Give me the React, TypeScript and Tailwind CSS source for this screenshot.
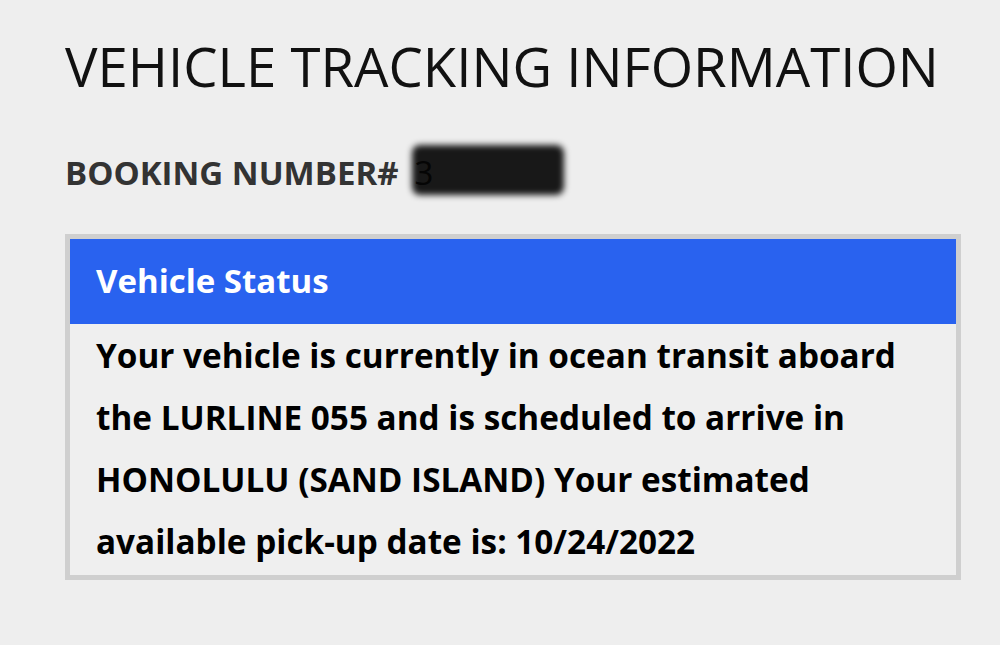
export default function App() {
  return (
    <div className="min-h-[645px] w-[1000px] bg-[#eeeeee] pl-[65px] pt-[30px]" style={{ fontFamily: '"Open Sans", "Noto Sans", sans-serif' }}>
      <h1 className="whitespace-nowrap text-[54.5px] leading-[72px] font-normal text-[#111111]">VEHICLE TRACKING INFORMATION</h1>
      <div className="mt-[46px] flex items-center">
        <span className="text-[33px] font-bold text-[#333333]">BOOKING NUMBER#</span>
        <span className="relative ml-[16px] inline-block">
          <span className="text-[33px] text-[#333333]">3</span>
          <span className="absolute left-[-2px] top-[-3px] h-[50px] w-[152px] rounded-[8px] bg-black/90 blur-[3px]" />
        </span>
      </div>
      <div className="mt-[36px] w-[896px] border-[5px] border-[#cfcfcf]">
        <div className="flex h-[85px] items-center bg-[#2962ef] px-[26px] text-[33px] font-bold text-white">Vehicle Status</div>
        <div className="whitespace-nowrap bg-[#efefef] px-[26px] pb-[3px] pt-0 text-[33.3px] font-bold leading-[62px] text-black">
          Your vehicle is currently in ocean transit aboard<br />
          the LURLINE 055 and is scheduled to arrive in<br />
          HONOLULU (SAND ISLAND) Your estimated<br />
          available pick-up date is: 10/24/2022
        </div>
      </div>
    </div>
  );
}
